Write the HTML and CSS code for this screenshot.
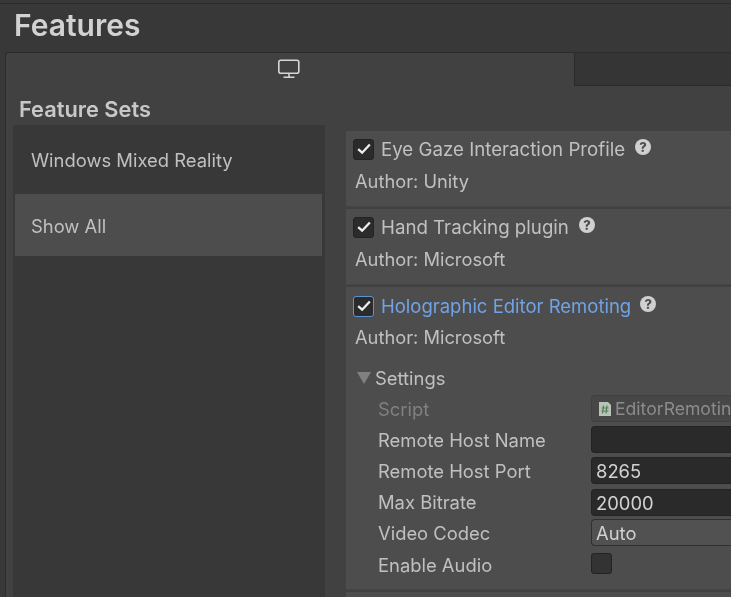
FILE: index.html
```html
<!DOCTYPE html>
<html lang="en">
<head>
    <meta charset="UTF-8">
    <title>Features</title>
    <link rel="stylesheet" href="styles.css">
</head>
<body>

    <div class="window">
        <h1 class="title">Features</h1>

        <div class="panel">
            <div class="tabs">
                <div class="tab tab-active">
                    <svg class="monitor" width="24" height="20" viewBox="0 0 24 20" fill="none" stroke="#d6d6d6" stroke-width="1.6">
                        <rect x="1.8" y="1.3" width="20" height="13" rx="2"/>
                        <path d="M12 14.500v3.500M6.500 18.300h11"/>
                    </svg>
                </div>
                <div class="tab tab-other"></div>
            </div>

            <h2 class="sets-title">Feature Sets</h2>

            <div class="columns">
                <div class="sidebar">
                    <div class="set-item">Windows Mixed Reality</div>
                    <div class="set-item set-selected">Show All</div>
                </div>

                <div class="features">
                    <div class="feature">
                        <div class="feature-head">
                            <span class="check">
                                <svg width="14" height="12" viewBox="0 0 12 10" fill="none" stroke="#eee" stroke-width="2"><path d="M1 5.200l3.400 3L11 1.200"/></svg>
                            </span>
                            <span class="feature-name">Eye Gaze Interaction Profile</span>
                            <span class="help">?</span>
                        </div>
                        <div class="author">Author: Unity</div>
                    </div>

                    <div class="feature">
                        <div class="feature-head">
                            <span class="check">
                                <svg width="14" height="12" viewBox="0 0 12 10" fill="none" stroke="#eee" stroke-width="2"><path d="M1 5.200l3.400 3L11 1.200"/></svg>
                            </span>
                            <span class="feature-name">Hand Tracking plugin</span>
                            <span class="help">?</span>
                        </div>
                        <div class="author">Author: Microsoft</div>
                    </div>

                    <div class="feature feature-open">
                        <div class="feature-head">
                            <span class="check check-focus">
                                <svg width="14" height="12" viewBox="0 0 12 10" fill="none" stroke="#eee" stroke-width="2"><path d="M1 5.200l3.400 3L11 1.200"/></svg>
                            </span>
                            <span class="feature-name name-focus">Holographic Editor Remoting</span>
                            <span class="help help-focus">?</span>
                        </div>
                        <div class="author author-open">Author: Microsoft</div>

                        <div class="settings-head"><span class="arrow"></span>Settings</div>

                        <div class="row">
                            <span class="row-label label-off">Script</span>
                            <div class="field field-script">
                                <svg class="script-icon" width="14" height="16" viewBox="0 0 14 16"><path d="M1 1h9l3 3v11H1z" fill="#b9c4b8"/><path d="M5.500 4.500l-1 8M9 4.500l-1 8M3.500 7h7M3.500 10h7" stroke="#4f7d58" stroke-width="1.200"/></svg>
                                <span>EditorRemotin</span>
                            </div>
                        </div>
                        <div class="row">
                            <span class="row-label">Remote Host Name</span>
                            <div class="field"></div>
                        </div>
                        <div class="row">
                            <span class="row-label">Remote Host Port</span>
                            <div class="field">8265</div>
                        </div>
                        <div class="row">
                            <span class="row-label">Max Bitrate</span>
                            <div class="field">20000</div>
                        </div>
                        <div class="row">
                            <span class="row-label">Video Codec</span>
                            <div class="field field-select">Auto</div>
                        </div>
                        <div class="row">
                            <span class="row-label">Enable Audio</span>
                            <span class="check check-empty"></span>
                        </div>
                    </div>

                    <div class="feature feature-next"></div>
                </div>
            </div>
        </div>
    </div>

</body>
</html>
```

FILE: styles.css
```css
html, body {
    margin: 0;
    height: 100%;
    overflow: hidden;
    background-color: #383838;
}
.window {
    width: 731px;
    height: 597px;
    overflow: hidden;
    box-sizing: border-box;
    border-top: 1px solid #2c2c2c;
    margin-top: 3px;
    font-family: Inter, "Noto Sans", sans-serif;
    font-size: 18.4px;
    color: #c0c0c0;
    filter: blur(0.6px);
}
.title {
    margin: 0;
    height: 48px;
    padding-left: 14px;
    font-size: 30px;
    line-height: 42px;
    font-weight: 600;
    color: #d2d2d2;
    box-sizing: border-box;
}
.panel {
    margin-left: 5px;
    height: 560px;
    background-color: #414141;
    border-top: 1px solid #2c2c2c;
    border-left: 1px solid #2c2c2c;
    border-top-left-radius: 4px;
}
.tabs {
    display: flex;
    height: 33px;
}
.tab-active {
    width: 566px;
    display: flex;
    justify-content: center;
    padding-top: 6px;
    box-sizing: border-box;
}
.tab-other {
    flex: 1;
    margin-left: 2px;
    background-color: #353535;
    border-left: 1px solid #2a2a2a;
    border-bottom: 1px solid #2a2a2a;
}
.sets-title {
    margin: 0;
    height: 39px;
    padding-left: 13px;
    font-size: 21.8px;
    line-height: 47px;
    font-weight: 600;
    color: #c8c8c8;
    box-sizing: border-box;
}
.columns {
    display: flex;
    align-items: flex-start;
}
.sidebar {
    width: 312px;
    height: 480px;
    flex-shrink: 0;
    margin-left: 7px;
    padding: 0 3px 0 2px;
    box-sizing: border-box;
    background-color: #383838;
}
.set-item {
    height: 69px;
    line-height: 70px;
    padding-left: 16px;
}
.set-selected {
    height: 62px;
    line-height: 65px;
    background-color: #4d4d4d;
}
.features {
    width: 385px;
    flex-shrink: 0;
    margin: 6px 0 0 21px;
}
.feature {
    background-color: #4d4d4d;
    height: 76px;
    margin-bottom: 2px;
    padding: 6px 0 0 7px;
    box-sizing: border-box;
    border-bottom: 1px solid #454545;
}
.feature-open {
    height: 303px;
    padding-top: 7px;
}
.feature-head {
    display: flex;
    align-items: center;
    height: 24px;
}
.check {
    width: 21px;
    height: 21px;
    flex-shrink: 0;
    display: flex;
    align-items: center;
    justify-content: center;
    background-color: #2b2b2b;
    border: 1px solid #232323;
    border-radius: 3px;
    box-sizing: border-box;
}
.check-focus {
    border: 1px solid #5b93d8;
}
.check-empty {
    margin-top: -2px;
    background-color: #333333;
}
.feature-name {
    margin-left: 7px;
    font-size: 18.7px;
}
.name-focus {
    font-size: 18.5px;
    color: #70a3e6;
}
.help {
    width: 16px;
    height: 16px;
    margin: -4px 0 0 10px;
    border-radius: 50%;
    background-color: #d0d0d0;
    color: #4d4d4d;
    font-size: 13px;
    font-weight: 800;
    line-height: 16px;
    text-align: center;
}
.help-focus {
    margin-left: 9px;
}
.author {
    height: 26px;
    margin: 7px 0 0 2px;
    font-size: 18.3px;
    line-height: 26px;
}
.author-open {
    margin-top: 6px;
}
.settings-head {
    display: flex;
    align-items: center;
    height: 26px;
    margin: 15px 0 2px 4px;
}
.arrow {
    width: 0;
    height: 0;
    margin: 0 4px 0 0;
    border-left: 7px solid transparent;
    border-right: 7px solid transparent;
    border-top: 12px solid #808080;
}
.row {
    display: flex;
    align-items: center;
    height: 31.2px;
    padding-left: 25px;
}
.row-label {
    width: 213px;
    flex-shrink: 0;
}
.label-off {
    color: #808080;
}
.field {
    flex: 1;
    min-width: 0;
    height: 27px;
    padding-left: 4px;
    line-height: 27px;
    white-space: nowrap;
    overflow: hidden;
    background-color: #2a2a2a;
    border: 1px solid #232323;
    border-radius: 4px 0 0 4px;
    border-right: none;
    box-sizing: border-box;
    color: #d2d2d2;
}
.field-script {
    display: flex;
    align-items: center;
    gap: 3px;
    padding-left: 6px;
    font-size: 17.6px;
    background-color: #474747;
    border-color: #404040;
    color: #8c8c8c;
}
.script-icon {
    flex-shrink: 0;
}
.field-select {
    margin-bottom: 2px;
    background-color: #515151;
    border-color: #303030;
}
.feature-next {
    height: 20px;
    margin: 0;
}
```
